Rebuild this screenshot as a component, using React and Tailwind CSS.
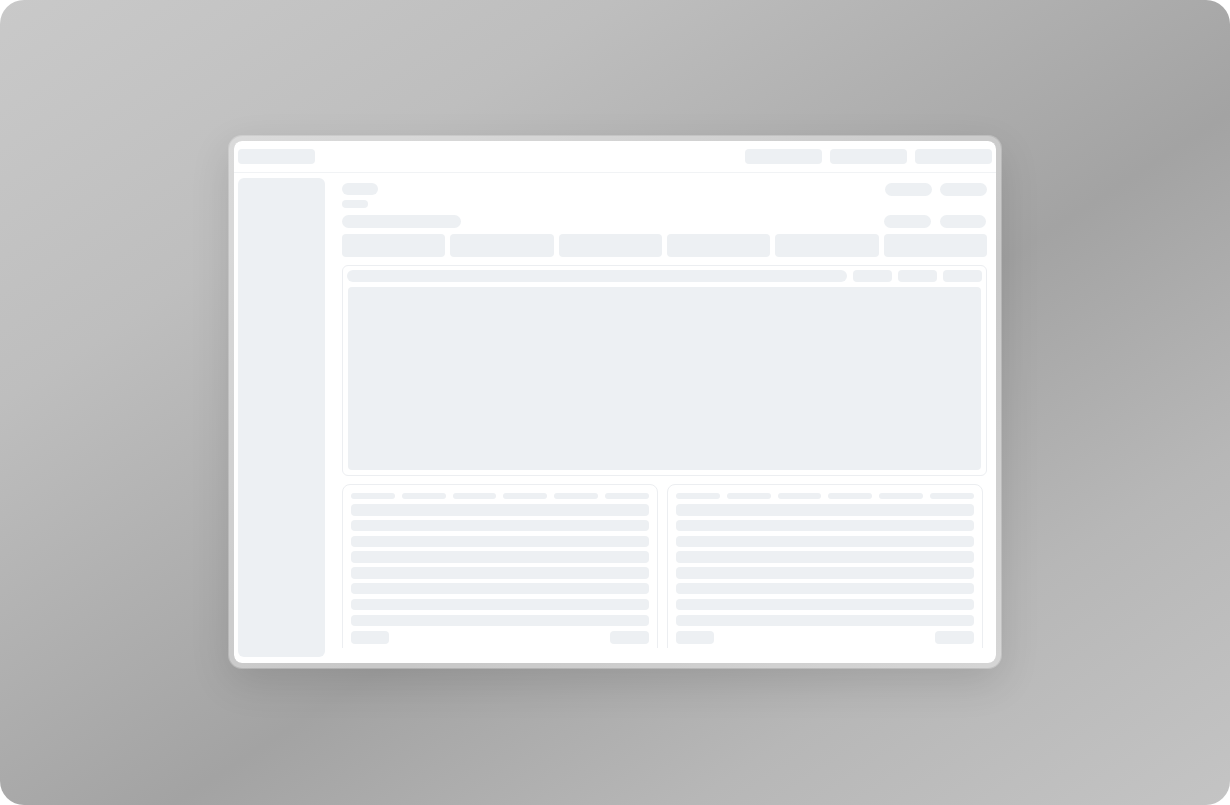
import React from "react";

const Bone = ({ className = "" }) => (
  <div className={`bg-[#edf0f3] ${className}`} />
);

const TableCard = () => {
  const rows = [0, 1, 2, 3, 4, 5, 6, 7];
  return (
    <div className="h-[200px] rounded-lg border border-[#eceef1] px-2 pt-2">
      <div className="grid grid-cols-6 gap-[7px]">
        {[0, 1, 2, 3, 4, 5].map((i) => (
          <Bone key={i} className="h-[6px] rounded-sm" />
        ))}
      </div>
      <div className="mt-[5px] flex flex-col gap-[4.3px]">
        {rows.map((i) => (
          <Bone key={i} className="h-[11.5px] rounded" />
        ))}
      </div>
      <div className="mt-[5px] flex justify-between">
        <Bone className="h-[13px] w-[38px] rounded" />
        <Bone className="h-[13px] w-[39px] rounded" />
      </div>
    </div>
  );
};

export default function App() {
  return (
    <div className="min-h-screen bg-white">
      <div className="w-[1230px] h-[805px] overflow-hidden rounded-[24px] bg-[linear-gradient(to_bottom_right,#c9c9c9_0%,#bebebe_25%,#a3a3a3_57%,#b7b7b7_78%,#c4c4c4_100%)] pl-[229px] pt-[136px]">
        <div className="w-[772px] h-[532px] rounded-[13px] border-[5px] border-white/40 shadow-[0_0_0_1px_rgba(255,255,255,0.25),0_14px_40px_rgba(0,0,0,0.12)]">
          <div className="flex h-full flex-col overflow-hidden rounded-[8px] bg-white">
            {/* top bar */}
            <div className="flex h-[32px] shrink-0 items-center justify-between border-b border-[#f1f3f5] px-1">
              <Bone className="h-[15px] w-[77px] rounded" />
              <div className="flex gap-[8px]">
                <Bone className="h-[15px] w-[77px] rounded" />
                <Bone className="h-[15px] w-[77px] rounded" />
                <Bone className="h-[15px] w-[77px] rounded" />
              </div>
            </div>

            <div className="flex min-h-0 flex-1">
              {/* sidebar */}
              <Bone className="mb-[6px] ml-1 mt-[5px] w-[87px] rounded-md" />

              {/* main */}
              <div className="mb-[15px] ml-[17px] mr-[9px] mt-[10px] flex min-w-0 flex-1 flex-col overflow-hidden">
                <div className="flex justify-between">
                  <div className="flex flex-col">
                    <Bone className="h-[12px] w-[36px] rounded-full" />
                    <Bone className="mt-[5px] h-[8px] w-[26px] rounded-sm" />
                    <Bone className="mt-[7px] h-[13px] w-[119px] rounded-full" />
                  </div>
                  <div className="flex flex-col items-end">
                    <div className="flex gap-[8px]">
                      <Bone className="h-[13px] w-[47px] rounded-full" />
                      <Bone className="h-[13px] w-[47px] rounded-full" />
                    </div>
                    <div className="mt-[19px] flex gap-[9px] pr-px">
                      <Bone className="h-[13px] w-[47px] rounded-full" />
                      <Bone className="h-[13px] w-[46px] rounded-full" />
                    </div>
                  </div>
                </div>

                <div className="mt-[6px] grid grid-cols-6 gap-[5px]">
                  {[0, 1, 2, 3, 4, 5].map((i) => (
                    <Bone key={i} className="h-[23px] rounded" />
                  ))}
                </div>

                <div className="mt-2 flex h-[211px] shrink-0 flex-col rounded-md border border-[#eceef1] p-1">
                  <div className="flex gap-[6px]">
                    <Bone className="h-[12px] flex-1 rounded-full" />
                    <Bone className="h-[12px] w-[39px] rounded" />
                    <Bone className="h-[12px] w-[39px] rounded" />
                    <Bone className="h-[12px] w-[39px] rounded" />
                  </div>
                  <Bone className="mx-px mb-px mt-[5px] flex-1 rounded" />
                </div>

                <div className="mt-2 grid shrink-0 grid-cols-2 gap-[9px] pr-1">
                  <TableCard />
                  <TableCard />
                </div>
              </div>
            </div>
          </div>
        </div>
      </div>
    </div>
  );
}
